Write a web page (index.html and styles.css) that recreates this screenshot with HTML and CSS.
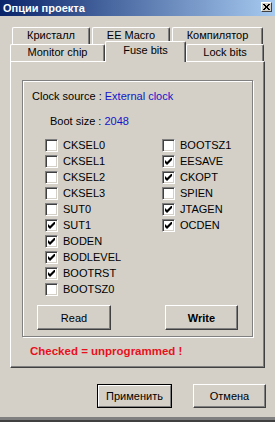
FILE: index.html
```html
<!DOCTYPE html>
<html>
<head>
<meta charset="utf-8">
<link rel="stylesheet" href="styles.css">
</head>
<body>
<div class="window">
  <div class="titlebar">
    <span class="title">Опции проекта</span>
    <span class="close"><svg width="7" height="6" viewBox="0 0 7 6"><path d="M0 0L6 6M1 0L7 6M6 0L0 6M7 0L1 6" stroke="#000" stroke-width="1"/></svg></span>
  </div>
  <div class="tabs">
    <div class="row row-back">
      <div class="tab t1">Кристалл</div>
      <div class="tab t2">EE Macro</div>
      <div class="tab t3">Компилятор</div>
    </div>
    <div class="row row-front">
      <div class="tab t4">Monitor chip</div>
      <div class="tab t5 selected">Fuse bits</div>
      <div class="tab t6">Lock bits</div>
    </div>
  </div>
  <div class="panel">
    <div class="group">
      <div class="info info-clock">Clock source : <span class="val">External clock</span></div>
      <div class="info info-boot">Boot size : <span class="val">2048</span></div>
      <div class="checks">
        <div class="col col-left">
          <div class="cb"><span class="box"></span><span class="lbl">CKSEL0</span></div>
          <div class="cb"><span class="box"></span><span class="lbl">CKSEL1</span></div>
          <div class="cb"><span class="box"></span><span class="lbl">CKSEL2</span></div>
          <div class="cb"><span class="box"></span><span class="lbl">CKSEL3</span></div>
          <div class="cb"><span class="box"></span><span class="lbl">SUT0</span></div>
          <div class="cb"><span class="box"><svg class="chk" width="7" height="7" viewBox="0 0 7 7"><polygon points="0,2 2,4 7,-1 7,2 2,7 0,5" fill="#000"/></svg></span><span class="lbl">SUT1</span></div>
          <div class="cb"><span class="box"><svg class="chk" width="7" height="7" viewBox="0 0 7 7"><polygon points="0,2 2,4 7,-1 7,2 2,7 0,5" fill="#000"/></svg></span><span class="lbl">BODEN</span></div>
          <div class="cb"><span class="box"><svg class="chk" width="7" height="7" viewBox="0 0 7 7"><polygon points="0,2 2,4 7,-1 7,2 2,7 0,5" fill="#000"/></svg></span><span class="lbl">BODLEVEL</span></div>
          <div class="cb"><span class="box"><svg class="chk" width="7" height="7" viewBox="0 0 7 7"><polygon points="0,2 2,4 7,-1 7,2 2,7 0,5" fill="#000"/></svg></span><span class="lbl">BOOTRST</span></div>
          <div class="cb"><span class="box"></span><span class="lbl">BOOTSZ0</span></div>
        </div>
        <div class="col col-right">
          <div class="cb"><span class="box"></span><span class="lbl">BOOTSZ1</span></div>
          <div class="cb"><span class="box"><svg class="chk" width="7" height="7" viewBox="0 0 7 7"><polygon points="0,2 2,4 7,-1 7,2 2,7 0,5" fill="#000"/></svg></span><span class="lbl">EESAVE</span></div>
          <div class="cb"><span class="box"><svg class="chk" width="7" height="7" viewBox="0 0 7 7"><polygon points="0,2 2,4 7,-1 7,2 2,7 0,5" fill="#000"/></svg></span><span class="lbl">CKOPT</span></div>
          <div class="cb"><span class="box"></span><span class="lbl">SPIEN</span></div>
          <div class="cb"><span class="box"><svg class="chk" width="7" height="7" viewBox="0 0 7 7"><polygon points="0,2 2,4 7,-1 7,2 2,7 0,5" fill="#000"/></svg></span><span class="lbl">JTAGEN</span></div>
          <div class="cb"><span class="box"><svg class="chk" width="7" height="7" viewBox="0 0 7 7"><polygon points="0,2 2,4 7,-1 7,2 2,7 0,5" fill="#000"/></svg></span><span class="lbl">OCDEN</span></div>
        </div>
      </div>
      <div class="group-buttons">
        <div class="btn btn-read">Read</div>
        <div class="btn btn-write">Write</div>
      </div>
    </div>
    <div class="note">Checked = unprogrammed !</div>
  </div>
  <div class="footer">
    <div class="btn btn-default"><span class="btn-inner">Применить</span></div>
    <div class="btn btn-cancel">Отмена</div>
  </div>
</div>
</body>
</html>
```

FILE: styles.css
```css
* { box-sizing: border-box; }
html, body { margin: 0; padding: 0; }
body {
  width: 275px;
  height: 422px;
  overflow: hidden;
  background: #d4d0c8;
  font-family: "Liberation Sans", Arial, sans-serif;
  font-size: 11px;
  color: #000;
}
.window {
  width: 275px;
  height: 422px;
  display: flex;
  flex-direction: column;
  background: #d4d0c8;
  border-bottom: 2px solid #404040;
  box-shadow: inset 0 -3px 0 #808080;
}
.titlebar {
  height: 16px;
  display: flex;
  align-items: center;
  justify-content: space-between;
  padding: 0 3px 0 3px;
  background: linear-gradient(to right, #0a246a, #a6caf0);
}
.title {
  color: #fff;
  font-weight: bold;
  font-size: 11px;
  line-height: 13px;
}
.close {
  width: 11px;
  height: 10px;
  margin-top: -2px;
  background: #d4d0c8;
  border-top: 1px solid #fff;
  border-left: 1px solid #fff;
  border-right: 1px solid #404040;
  border-bottom: 1px solid #404040;
  display: flex;
  align-items: center;
  justify-content: center;
}
.close svg { display: block; }
.tabs {
  margin-top: 11px;
  display: flex;
  flex-direction: column;
}
.row {
  display: flex;
  height: 17px;
}
.row-back { padding-left: 12px; gap: 2px; }
.row-front { padding-left: 10px; align-items: flex-end; }
.tab {
  height: 17px;
  text-align: center;
  line-height: 15px;
  background: #d4d0c8;
  border-top: 1px solid #fff;
  border-left: 1px solid #fff;
  border-right: 1px solid #404040;
  box-shadow: inset -1px 0 0 #808080;
  border-radius: 2px 2px 0 0;
}
.t1 { width: 78px; }
.t2 { width: 78px; }
.t3 { width: 91px; }
.t4 { width: 95px; }
.t5 { width: 81px; }
.t6 { width: 78px; }
.tab.selected {
  height: 21px;
  margin-bottom: -1px;
  position: relative;
  z-index: 1;
  line-height: 16px;
}
.panel {
  margin-left: 10px;
  width: 255px;
  height: 307px;
  border-top: 1px solid #fff;
  border-left: 1px solid #fff;
  border-right: 1px solid #404040;
  border-bottom: 1px solid #404040;
  box-shadow: inset -1px -1px 0 #808080;
  display: flex;
  flex-direction: column;
}
.group {
  margin: 18px 0 0 11px;
  width: 231px;
  height: 257px;
  border: 1px solid #808080;
  box-shadow: 1px 1px 0 #fff, inset 1px 1px 0 #fff;
  padding: 9px 0 0 9px;
  display: flex;
  flex-direction: column;
}
.info { line-height: 13px; height: 13px; }
.info-boot { margin-top: 12px; padding-left: 18px; }
.val { color: #1414c8; }
.checks {
  margin-top: 11px;
  margin-left: 13px;
  display: flex;
}
.col { display: flex; flex-direction: column; }
.col-left { width: 117px; }
.cb {
  height: 16px;
  display: flex;
  align-items: flex-start;
  gap: 5px;
}
.box {
  width: 13px;
  height: 13px;
  background: #fff;
  border-top: 1px solid #808080;
  border-left: 1px solid #808080;
  border-right: 1px solid #fff;
  border-bottom: 1px solid #fff;
  box-shadow: inset 1px 1px 0 #404040, inset -1px -1px 0 #d4d0c8;
  display: flex;
  align-items: center;
  justify-content: center;
}
.chk { display: block; }
.lbl { line-height: 13px; }
.group-buttons {
  margin-top: 6px;
  margin-left: 5px;
  display: flex;
  gap: 54px;
}
.btn {
  height: 25px;
  display: flex;
  align-items: center;
  justify-content: center;
  background: #d4d0c8;
  border-top: 1px solid #fff;
  border-left: 1px solid #fff;
  border-right: 1px solid #404040;
  border-bottom: 1px solid #404040;
  box-shadow: inset -1px -1px 0 #808080;
}
.btn-read { width: 74px; }
.btn-write { width: 73px; font-weight: bold; }
.note {
  margin: 8px 0 0 19px;
  line-height: 13px;
  font-size: 11.5px;
  color: #e8101c;
  font-weight: bold;
}
.footer {
  margin-top: 16px;
  display: flex;
  justify-content: flex-end;
  gap: 21px;
  padding-right: 9px;
}
.footer .btn { height: 24px; }
.btn-default {
  width: 75px;
  border: 1px solid #000;
  box-shadow: none;
  padding: 0;
}
.btn-inner {
  width: 100%;
  height: 100%;
  display: flex;
  align-items: center;
  justify-content: center;
  border-top: 1px solid #fff;
  border-left: 1px solid #fff;
  border-right: 1px solid #808080;
  border-bottom: 1px solid #808080;
}
.btn-cancel { width: 73px; }
```
